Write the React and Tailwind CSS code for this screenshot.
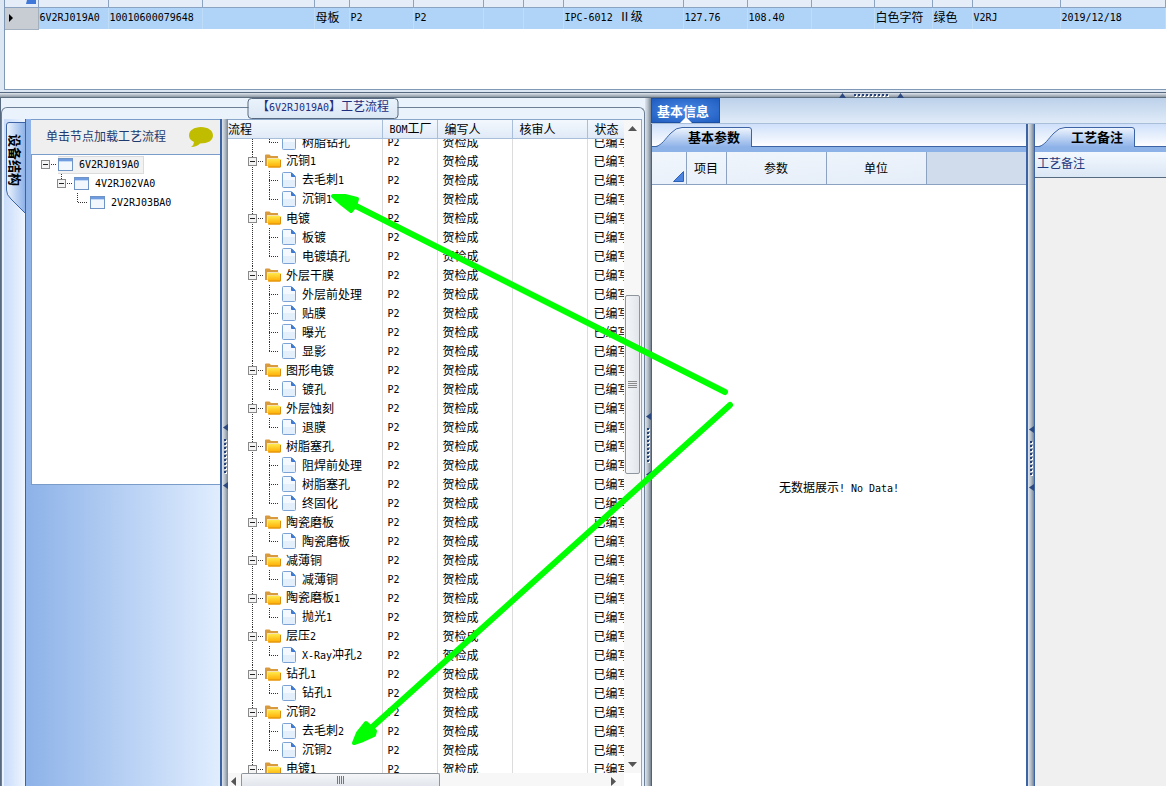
import { useState } from 'react';

const orderCols = [
  { w: 'w-[33px]', text: '' },
  { w: 'w-[70px]', text: '6V2RJ019A0' },
  { w: 'w-[94px]', text: '10010600079648' },
  { w: 'w-[112px]', text: '' },
  { w: 'w-[35px]', text: '母板' },
  { w: 'w-[64px]', text: 'P2' },
  { w: 'w-[70px]', text: 'P2' },
  { w: 'w-[40px]', text: '' },
  { w: 'w-[40px]', text: '' },
  { w: 'w-[120px]', text: 'IPC-6012 Ⅱ级' },
  { w: 'w-[64px]', text: '127.76' },
  { w: 'w-[64px]', text: '108.40' },
  { w: 'w-[63px]', text: '' },
  { w: 'w-[58px]', text: '白色字符' },
  { w: 'w-[40px]', text: '绿色' },
  { w: 'w-[88px]', text: 'V2RJ' },
  { w: '', text: '2019/12/18' },
];

const groups = [
  { name: '', steps: ['树脂钻孔'] },
  { name: '沉铜1', steps: ['去毛刺1', '沉铜1'] },
  { name: '电镀', steps: ['板镀', '电镀填孔'] },
  { name: '外层干膜', steps: ['外层前处理', '贴膜', '曝光', '显影'] },
  { name: '图形电镀', steps: ['镀孔'] },
  { name: '外层蚀刻', steps: ['退膜'] },
  { name: '树脂塞孔', steps: ['阻焊前处理', '树脂塞孔', '终固化'] },
  { name: '陶瓷磨板', steps: ['陶瓷磨板'] },
  { name: '减薄铜', steps: ['减薄铜'] },
  { name: '陶瓷磨板1', steps: ['抛光1'] },
  { name: '层压2', steps: ['X-Ray冲孔2'] },
  { name: '钻孔1', steps: ['钻孔1'] },
  { name: '沉铜2', steps: ['去毛刺2', '沉铜2'] },
  { name: '电镀1', steps: [] },
];

const rows = groups.flatMap((g) => [
  ...(g.name ? [{ name: g.name, folder: true }] : []),
  ...g.steps.map((s, i) => ({ name: s, folder: false, last: i === g.steps.length - 1 })),
]);

// latin runs are set in a half-width mono face next to full-width characters
const Txt = ({ children }) =>
  children.split(/([\x20-\x7e]+)/).map((part, i) =>
    i % 2 ? (
      <span key={i} className="font-['DejaVu_Sans_Mono',monospace] text-[10px]">{part}</span>
    ) : (
      part
    )
  );

const Toggle = ({ label, lineTop, lineBottom, onClick }) => (
  <button type="button" aria-label={label} onClick={onClick} className="shrink-0">
    <svg width="9" height="19" viewBox="0 0 9 19" className="block">
      {lineTop && <path d="M4.5 0V5" stroke="#333" strokeDasharray="1 1" />}
      {lineBottom && <path d="M4.5 15V19" stroke="#333" strokeDasharray="1 1" />}
      <rect x="0.5" y="5.5" width="8" height="8" fill="#f4f4f4" stroke="#8a8a8a" />
      <path d="M2 9.5H7" stroke="#222" />
    </svg>
  </button>
);

const Dash = ({ className }) => (
  <svg viewBox="0 0 8 19" className={className}>
    <path d="M1 9.5H6" stroke="#333" strokeDasharray="1 1" />
  </svg>
);

const FolderIcon = () => (
  <svg width="16" height="14" viewBox="0 0 16 14" className="block shrink-0">
    <defs>
      <linearGradient id="folder" x1="0" y1="0" x2="0" y2="1">
        <stop offset="0" stopColor="#ffe94a" />
        <stop offset="1" stopColor="#ffa800" />
      </linearGradient>
    </defs>
    <path d="M0 12V1.500Q0 0.5 1 0.5H4.500L6 2H13V12Z" fill="#d99a3c" />
    <path d="M2 12V4H14V5" fill="#f6e3b8" />
    <path d="M3 13.500V6Q3 5 4 5H15Q16 5 16 6V12.5Q16 13.5 15 13.5Z" fill="url(#folder)" />
    <path d="M3.500 13H15Q15.500 13 15.5 12.500V6" fill="none" stroke="#d98e10" />
  </svg>
);

const FileIcon = () => (
  <svg width="14" height="16" viewBox="0 0 14 16" className="block shrink-0">
    <path d="M0.5 1.5Q0.5 0.5 1.5 0.5H9.5L13.5 4.5V14.5Q13.5 15.5 12.5 15.5H1.5Q0.5 15.5 0.5 14.5Z" fill="#f4f9ff" stroke="#7ba3d6" />
    <path d="M1 8H13V15H1Z" fill="#e3effb" />
    <path d="M9.5 1V4.5H13Z" fill="#3b78d4" stroke="#3b78d4" />
  </svg>
);

const WindowIcon = () => (
  <svg width="16" height="13" viewBox="0 0 16 13" className="block shrink-0">
    <rect x="0.5" y="0.5" width="14" height="12" fill="#f2f7fd" stroke="#6f93c4" />
    <path d="M1 1H14V3H1Z" fill="#6f9ce0" />
    <path d="M1 3.5H14" stroke="#c3d8f4" />
  </svg>
);

const arrowPath = { left: 'M6 0V7L1 3.5Z', up: 'M0 6H7L3.5 1Z' };

const VSplitter = () => (
  <div
    role="separator"
    aria-orientation="vertical"
    className="flex w-[6px] shrink-0 flex-col items-center justify-center gap-[7px] bg-linear-to-r from-[#dfe5ec] via-[#b3bec9] to-[#76828f] pt-2"
  >
    <svg width="6" height="8" viewBox="0 0 6 8"><path d={arrowPath.left} fill="#2c4a80" /></svg>
    <svg width="6" height="36" viewBox="0 0 6 36">
      <path d="M4 1V35" stroke="#fff" strokeWidth="2" strokeDasharray="2 2" />
      <path d="M3 0V35" stroke="#24407a" strokeWidth="2" strokeDasharray="2 2" />
    </svg>
    <svg width="6" height="8" viewBox="0 0 6 8"><path d={arrowPath.left} fill="#2c4a80" /></svg>
  </div>
);

const SlantTab = ({ label }) => (
  <div className="h-[28px] shrink-0 border-b-[5px] border-[#8db2e8] bg-linear-to-b from-[#cfe0fa] to-white pt-[2px]">
    <div className="h-[21px] border-b border-[#3c64a4] px-1">
      <button type="button" role="tab" aria-selected="true" className="relative block h-[21px] w-[96px]">
        <svg viewBox="0 0 96 21" className="absolute inset-0 h-[21px] w-[96px]">
          <defs>
            <linearGradient id="slant" x1="0" y1="0" x2="0" y2="1">
              <stop offset="0" stopColor="#f0f6fe" />
              <stop offset="1" stopColor="#8db2e8" />
            </linearGradient>
          </defs>
          <path d="M0 21C6 19 9 13 15 7Q20 1.5 26 1.5H93Q95.5 1.5 95.5 4V21Z" fill="url(#slant)" />
          <path d="M0 20.5C6 19 9 13 15 7Q20 1.5 26 1.5H93Q95.5 1.5 95.5 4V21" fill="none" stroke="#3c64a4" />
        </svg>
        <span className="relative pl-5 text-[13px] leading-[20px] font-bold text-black">{label}</span>
      </button>
    </div>
  </div>
);

const OrderGrid = () => (
  <div className="flex h-[93px] shrink-0 flex-col border-b border-[#56697f] bg-[#dce7f3] pb-[2px] pl-1">
    <div className="flex-1 border-b border-l border-[#7f98b5] bg-white">
      <table className="w-full table-fixed border-collapse">
        <colgroup>
          {orderCols.map((c, i) => <col key={i} className={c.w} />)}
        </colgroup>
        <thead>
          <tr className="h-[7px]">
            {orderCols.map((c, i) => (
              <th key={i} className="h-[7px] border-r border-b border-[#8ba3c0] bg-[#e4edf8] p-0 align-top leading-[0px]">
                {i === 0 && (
                  <svg width="12" height="4" viewBox="0 0 12 4" className="ml-auto block">
                    <path d="M1 0H10V4H0Z" fill="#3f78d8" />
                  </svg>
                )}
              </th>
            ))}
          </tr>
        </thead>
        <tbody>
          <tr className="h-[22px] bg-[#b0d4f8]">
            {orderCols.map((c, i) =>
              i === 0 ? (
                <td key={i} className="border-r border-b border-[#a3b1bf] bg-[#c8cdd4] p-0 pl-1">
                  <svg width="4" height="8" viewBox="0 0 4 8"><path d="M0 0L4 4L0 8Z" fill="#000" /></svg>
                </td>
              ) : (
                <td key={i} className="border-r border-[#bfdcf9] p-0 pb-[2px] pl-px leading-[16px] whitespace-nowrap">
                  <Txt>{c.text}</Txt>
                </td>
              )
            )}
          </tr>
        </tbody>
      </table>
    </div>
  </div>
);

const StructurePanel = () => (
  <div className="flex w-[220px] shrink-0 pl-[2px]">
    <div className="w-[22px] shrink-0 border-r border-[#3c64a4] bg-linear-to-r from-[#c9dcfa] to-[#eef5fe] pt-[3px]">
      <button type="button" role="tab" aria-selected="true" className="relative ml-px block h-[92px] w-[20px]">
        <svg viewBox="0 0 20 92" className="absolute inset-0 h-[92px] w-[20px]">
          <defs>
            <linearGradient id="side" x1="0" y1="0" x2="1" y2="0">
              <stop offset="0" stopColor="#eef5fe" />
              <stop offset="1" stopColor="#8db2e8" />
            </linearGradient>
          </defs>
          <path d="M20 0.5H4Q1.5 0.5 1.5 3V68Q1.5 73 6 77L20 91Z" fill="url(#side)" />
          <path d="M20 0.5H4Q1.5 0.5 1.5 3V68Q1.5 73 6 77L20 91" fill="none" stroke="#3c64a4" />
        </svg>
        <span className="absolute top-3 left-0 text-[13px] leading-[20px] font-bold text-black [text-orientation:sideways] [writing-mode:vertical-rl]">
          设备结构
        </span>
      </button>
    </div>
    <div className="flex min-w-0 flex-1 flex-col border-r-2 border-[#3c64a4] bg-linear-to-r from-[#8db2e8] to-[#e0edfe] pl-[5px]">
      <div className="flex h-[36px] shrink-0 items-center border-t border-b border-[#7a9cc9] bg-[#efefef] pl-[15px]">
        <span className="pb-[2px] text-[#1f3a6e]">单击节点加载工艺流程</span>
        <svg width="26" height="22" viewBox="0 0 26 22" className="ml-[22px]">
          <path d="M13 1C20 1 25 4.500 25 9.500S20 17.500 12 17.500C10 19.500 7 21 3 21Q6 19 6 16Q1 13.500 1 9.500C1 4.500 6 1 13 1Z" fill="#c0bd00" />
        </svg>
      </div>
      <div className="h-[330px] shrink-0 border-b border-l border-[#7a9cc9] bg-white">
        <div className="flex h-[19px] items-center pl-[9px]">
          <Toggle label="6V2RJ019A0" />
          <Dash className="h-[19px] w-2 shrink-0" />
          <span className="flex h-[18px] items-center gap-[5px] border border-l-0 border-[#dcdcdc] bg-[#f2f2f2] pr-1">
            <WindowIcon /><Txt>6V2RJ019A0</Txt>
          </span>
        </div>
        <div className="flex h-[19px] items-center pl-[25px]">
          <Toggle label="4V2RJ02VA0" lineTop />
          <Dash className="h-[19px] w-2 shrink-0" />
          <span className="flex items-center gap-[5px]"><WindowIcon /><Txt>4V2RJ02VA0</Txt></span>
        </div>
        <div className="flex h-[19px] items-center pl-[41px]">
          <svg width="17" height="19" viewBox="0 0 17 19" className="block shrink-0">
            <path d="M4.5 0V10M5 9.5H15" fill="none" stroke="#333" strokeDasharray="1 1" />
          </svg>
          <span className="flex items-center gap-[5px]"><WindowIcon /><Txt>2V2RJ03BA0</Txt></span>
        </div>
      </div>
    </div>
  </div>
);

const TreeCell = ({ row, onToggle }) =>
  row.folder ? (
    <div className="flex h-[19px] items-center pl-[20px]">
      <Toggle label={row.name} lineTop lineBottom onClick={onToggle} />
      <Dash className="h-[19px] w-2 shrink-0" />
      <FolderIcon />
      <span className="pb-px pl-[5px]"><Txt>{row.name}</Txt></span>
    </div>
  ) : (
    <div className="flex h-[19px] items-center">
      <svg width="54" height="19" viewBox="0 0 54 19" className="block shrink-0">
        <path d="M24.5 0V19M41 9.5H50" stroke="#333" strokeDasharray="1 1" />
        <path d={row.last ? 'M41.5 0V10' : 'M41.5 0V19'} stroke="#333" strokeDasharray="1 1" />
      </svg>
      <FileIcon />
      <span className="pb-px pl-[6px]"><Txt>{row.name}</Txt></span>
    </div>
  );

const FlowCols = () => (
  <colgroup>
    <col className="w-[154px]" />
    <col className="w-[55px]" />
    <col className="w-[75px]" />
    <col className="w-[75px]" />
    <col />
  </colgroup>
);

const ProcessFlow = () => {
  const [selected, setSelected] = useState(null);
  return (
    <div className="flex min-w-0 flex-1 flex-col border-t border-r border-[#8aa6c8] bg-white">
      <div className="flex min-h-0 flex-1">
        <div className="flex min-w-0 flex-1 flex-col overflow-hidden">
          <table className="w-full shrink-0 table-fixed border-collapse">
            <FlowCols />
            <thead>
              <tr className="h-[18px] bg-linear-to-b from-[#f3f8fd] to-[#e0eaf7] text-left leading-[14px]">
                <th className="border-r border-b border-[#a9bfd9] p-0 font-normal">流程</th>
                <th className="border-r border-b border-[#a9bfd9] p-0 pl-[7px] font-normal whitespace-nowrap"><Txt>BOM工厂</Txt></th>
                <th className="border-r border-b border-[#a9bfd9] p-0 pl-[7px] font-normal">编写人</th>
                <th className="border-r border-b border-[#a9bfd9] p-0 pl-[7px] font-normal">核审人</th>
                <th className="border-b border-[#a9bfd9] p-0 pl-[7px] font-normal whitespace-nowrap">状态</th>
              </tr>
            </thead>
          </table>
          <div className="min-h-0 flex-1 overflow-hidden">
            <table className="-mt-1.5 w-full table-fixed border-collapse">
              <FlowCols />
              <tbody className="leading-[14px]">
                {rows.map((row, i) => (
                  <tr key={i} className={selected === i ? 'h-[19px] bg-[#b0d4f8]' : 'h-[19px]'}>
                    <td className="border-r border-[#dcdcdc] p-0">
                      <TreeCell row={row} onToggle={() => setSelected(i)} />
                    </td>
                    <td className="border-r border-[#dcdcdc] p-0 pb-px pl-[5px]"><Txt>P2</Txt></td>
                    <td className="border-r border-[#dcdcdc] p-0 pb-px pl-[5px]">贺检成</td>
                    <td className="border-r border-[#dcdcdc] p-0" />
                    <td className="overflow-hidden p-0 pb-px pl-[6px] whitespace-nowrap">已编写</td>
                  </tr>
                ))}
              </tbody>
            </table>
          </div>
        </div>
        <div className="flex w-[17px] shrink-0 flex-col items-center bg-[#f7f7f8]">
          <svg width="9" height="5" viewBox="0 0 9 5" className="mt-[6px]"><path d="M0 5H9L4.5 0Z" fill="#555" /></svg>
          <div className="mt-[164px] flex h-[179px] w-[15px] items-center justify-center rounded-xs border border-[#8f959c] bg-linear-to-r from-[#f4f6f8] to-[#e2e6ec]">
            <svg width="9" height="8" viewBox="0 0 9 8"><path d="M0 .5H9M0 2.5H9M0 4.5H9M0 6.5H9" stroke="#8a8a8a" /></svg>
          </div>
          <svg width="9" height="5" viewBox="0 0 9 5" className="mt-auto mb-[6px]"><path d="M0 0H9L4.5 5Z" fill="#555" /></svg>
        </div>
      </div>
      <div className="flex h-[13px] shrink-0 pr-[17px]">
        <div className="flex min-w-0 flex-1 items-start bg-[#f7f7f8] pl-[3px]">
          <svg width="5" height="9" viewBox="0 0 5 9" className="mt-1"><path d="M5 0V9L0 4.5Z" fill="#555" /></svg>
          <div className="ml-[5px] flex h-[13px] w-[199px] items-center justify-center rounded-t-xs border border-b-0 border-[#8f959c] bg-linear-to-b from-[#f4f6f8] to-[#e2e6ec]">
            <svg width="8" height="8" viewBox="0 0 8 8"><path d="M.5 0V8M2.5 0V8M4.5 0V8M6.5 0V8" stroke="#777" /></svg>
          </div>
          <svg width="5" height="9" viewBox="0 0 5 9" className="mt-1 mr-2 ml-auto"><path d="M0 0V9L5 4.5Z" fill="#555" /></svg>
        </div>
      </div>
    </div>
  );
};

const ParamsPanel = () => (
  <div className="flex w-[377px] shrink-0 flex-col border-r-2 border-l border-[#3c64a4] bg-white">
    <SlantTab label="基本参数" />
    <table className="w-full shrink-0 table-fixed border-collapse">
      <colgroup>
        <col className="w-[34px]" />
        <col className="w-[40px]" />
        <col className="w-[100px]" />
        <col className="w-[100px]" />
        <col />
      </colgroup>
      <thead>
        <tr className="h-[32px] bg-linear-to-br from-[#f1f6fc] to-[#e3ecf8]">
          <th className="border-r border-b border-[#8ba3c0] p-0 pr-[2px] pb-[2px] align-bottom">
            <svg width="11" height="11" viewBox="0 0 11 11" className="ml-auto block">
              <path d="M10.5 0.5V10.5H0.5Z" fill="#4a84e0" stroke="#2e62b8" />
            </svg>
          </th>
          <th className="border-r border-b border-[#8ba3c0] p-0 font-normal">项目</th>
          <th className="border-r border-b border-[#8ba3c0] p-0 font-normal">参数</th>
          <th className="border-r border-b border-[#8ba3c0] p-0 font-normal">单位</th>
          <th className="border-b border-[#8ba3c0] bg-[#d0dcec] p-0" />
        </tr>
      </thead>
    </table>
    <div className="flex flex-1 items-center justify-center pt-1">
      <p><Txt>无数据展示! No Data!</Txt></p>
    </div>
  </div>
);

const RemarkPanel = () => (
  <div className="flex min-w-0 flex-1 flex-col border-l border-[#3c64a4] bg-[#f0f0f0]">
    <SlantTab label="工艺备注" />
    <div className="h-[26px] shrink-0 border-b border-[#56697f] bg-linear-to-b from-[#f3f8fe] to-[#dbe7f5] pl-[2px] leading-[22px] text-[#1f3a7e]">
      工艺备注
    </div>
  </div>
);

const Arrows = () => (
  <svg width="1166" height="786" viewBox="0 0 1166 786" className="pointer-events-none absolute top-0 left-0">
    <g stroke="#00ff00" fill="#00ff00" strokeLinecap="round" strokeLinejoin="round">
      <path d="M354 205L725 392" strokeWidth="6" />
      <path d="M333 196L345 196L357 199L355 206L351 211L342 204Z" strokeWidth="4" />
      <path d="M370 729L730 405" strokeWidth="6" />
      <path d="M354 743L358 733L366 723L375 731L374 735L363 740Z" strokeWidth="4" />
    </g>
  </svg>
);

export default function App() {
  return (
    <div className="relative flex h-screen flex-col overflow-hidden bg-[#eaf3fb] font-['Noto_Sans_CJK_SC',sans-serif] text-[12px] text-black">
      <OrderGrid />
      <div
        role="separator"
        className="flex h-[5px] shrink-0 items-center justify-center gap-[7px] border-b border-[#5f6f80] bg-linear-to-b from-[#dfe5ec] to-[#8e99a5] pl-[578px]"
      >
        <svg width="8" height="6" viewBox="0 0 8 6"><path d={arrowPath.up} fill="#2c4a80" /></svg>
        <svg width="36" height="4" viewBox="0 0 36 4">
          <path d="M1 3H36" stroke="#fff" strokeWidth="2" strokeDasharray="2 2" />
          <path d="M0 2H36" stroke="#24407a" strokeWidth="2" strokeDasharray="2 2" />
        </svg>
        <svg width="8" height="6" viewBox="0 0 8 6"><path d={arrowPath.up} fill="#2c4a80" /></svg>
      </div>
      <div className="flex min-h-0 flex-1">
        <div className="flex w-[645px] shrink-0 border-l border-[#56697f] pt-[9px]">
          <div className="relative flex w-full rounded-t-md border border-b-0 border-[#6d7f94] pt-[11px] pr-[2px]">
            <h2 className="absolute -top-[10px] left-1/2 h-[21px] w-[151px] -translate-x-1/2 rounded-sm border border-[#56697f] bg-linear-to-b from-[#eaf3fb] to-[#dbe7f5] text-center leading-[14px] whitespace-nowrap text-[#1f2f7e]">
              <Txt>【6V2RJ019A0】工艺流程</Txt>
            </h2>
            <StructurePanel />
            <VSplitter />
            <ProcessFlow />
          </div>
        </div>
        <VSplitter />
        <div className="flex min-w-0 flex-1 flex-col">
          <div className="h-[26px] shrink-0 border-b border-[#a9bfd9] bg-linear-to-b from-[#bcd1ea] to-[#e0ebf8]">
            <button
              type="button"
              role="tab"
              aria-selected="true"
              className="relative block h-[25px] w-[69px] border border-[#1d4fa5] bg-radial from-[#4b8be6] to-[#1f5cc0] pl-[5px] text-left text-[13px] leading-[20px] font-bold text-white"
            >
              基本信息
              <svg width="12" height="6" viewBox="0 0 12 6" className="absolute -bottom-px left-[28px]">
                <path d="M0 6L6 0L12 6Z" fill="#fff" />
              </svg>
            </button>
          </div>
          <div className="flex min-h-0 flex-1">
            <ParamsPanel />
            <VSplitter />
            <RemarkPanel />
          </div>
        </div>
      </div>
      <Arrows />
    </div>
  );
}
